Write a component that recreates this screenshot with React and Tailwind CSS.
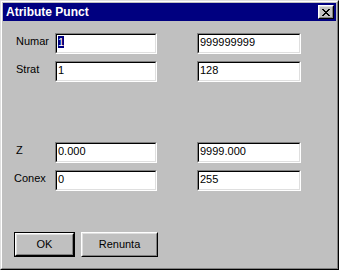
import React from "react";

const font = { fontFamily: '"Liberation Sans", Arial, sans-serif' };

function Field({ value, selected, w }) {
  return (
    <div
      className={`h-[21px] ${w} border border-t-[#808080] border-l-[#808080] border-b-white border-r-white`}
    >
      <div className="h-full w-full border border-t-black border-l-black border-b-[#dfdfdf] border-r-[#dfdfdf] bg-white pl-[1px] pt-[1px] text-[11px] leading-[13px] text-black">
        {selected ? (
          <span className="bg-[#000080] text-white">{value}</span>
        ) : (
          value
        )}
      </div>
    </div>
  );
}

function Row({ label, left, right, selected, labelPad = "pl-[13px]", mt }) {
  return (
    <div className={`flex ${mt} ${labelPad}`}>
      <div className={`${labelPad === "pl-[13px]" ? "w-[39px]" : "w-[41px]"} pt-[2px] text-[11px] leading-[13px] text-black`}>
        {label}
      </div>
      <Field value={left} selected={selected} w="w-[102px]" />
      <div className="w-[40px]" />
      <Field value={right} w="w-[104px]" />
    </div>
  );
}

function Button({ children, w, isDefault }) {
  const inner = (
    <div className="h-full w-full border border-t-white border-l-white border-b-black border-r-black">
      <div className="flex h-full w-full items-center justify-center border border-t-[#dfdfdf] border-l-[#dfdfdf] border-b-[#808080] border-r-[#808080] bg-[#c0c0c0] text-[11px] text-black">
        {children}
      </div>
    </div>
  );
  return (
    <div className={`h-[25px] ${w} ${isDefault ? "border border-black" : ""}`}>
      {inner}
    </div>
  );
}

export default function App() {
  return (
    <div
      className="h-[270px] w-[339px] border border-t-[#dfdfdf] border-l-[#dfdfdf] border-b-black border-r-black bg-[#c0c0c0]"
      style={font}
    >
      <div className="h-full w-full border border-t-white border-l-white border-b-[#808080] border-r-[#808080] p-[1px]">
        <div className="flex h-[18px] items-center justify-between bg-[#000080] pl-[3px] pr-[2px]">
          <span className="text-[12px] font-bold leading-[14px] text-white">
            Atribute Punct
          </span>
          <div className="h-[14px] w-[16px] border border-t-white border-l-white border-b-black border-r-black">
            <div className="flex h-full w-full items-center justify-center border border-t-[#dfdfdf] border-l-[#dfdfdf] border-b-[#808080] border-r-[#808080] bg-[#c0c0c0]">
              <svg width="8" height="7" viewBox="0 0 8 7" shapeRendering="crispEdges">
                <path d="M0 0h2v1h-2zM6 0h2v1h-2zM1 1h2v1h-2zM5 1h2v1h-2zM2 2h4v1h-4zM3 3h2v1h-2zM2 4h4v1h-4zM1 5h2v1h-2zM5 5h2v1h-2zM0 6h2v1h-2zM6 6h2v1h-2z" fill="black" />
              </svg>
            </div>
          </div>
        </div>
        <div className="flex flex-col">
          <Row mt="mt-[12px]" label="Numar" left="1" right="999999999" selected />
          <Row mt="mt-[7px]" label="Strat" left="1" right="128" />
          <Row mt="mt-[60px]" label="Z" left="0.000" right="9999.000" />
          <Row mt="mt-[7px]" label="Conex" left="0" right="255" labelPad="pl-[11px]" />
          <div className="mt-[41px] flex gap-[6px] pl-[11px]">
            <Button w="w-[61px]" isDefault>OK</Button>
            <Button w="w-[77px]">Renunta</Button>
          </div>
        </div>
      </div>
    </div>
  );
}
